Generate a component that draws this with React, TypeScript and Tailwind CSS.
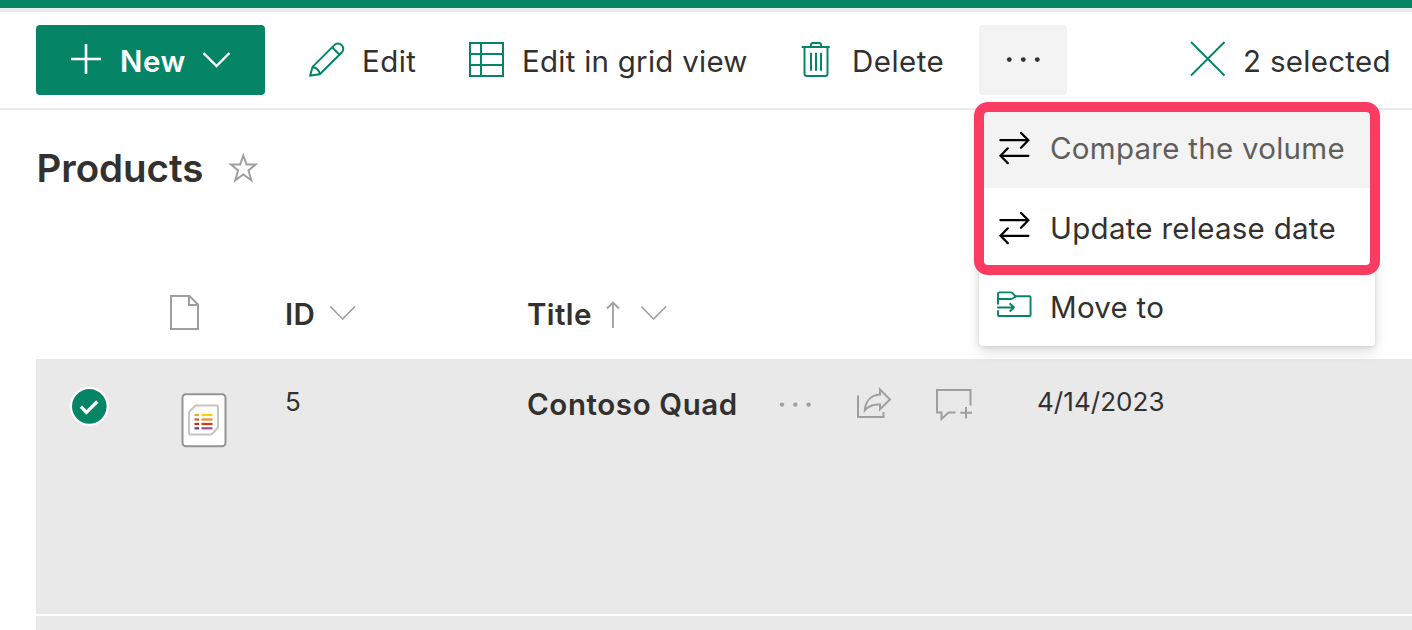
import React from "react";

const GREEN = "#058566";

function PencilIcon() {
  return (
    <svg width="38" height="38" viewBox="0 0 38 38" className="mb-px" fill="none" stroke={GREEN} strokeWidth="2">
      <path d="M2.2 34.6 4.5 25.9 26.3 4.1a5 5 0 0 1 7.4 7.4L11.8 33.2Z" />
      <path d="M24.1 6.3l7.4 7.4M4.5 25.9c3.6.4 6.8 3.4 7.3 7.3" />
    </svg>
  );
}

function GridIcon() {
  return (
    <svg width="35" height="35" viewBox="0 0 35 35" className="mb-px" fill="none" stroke={GREEN} strokeWidth="2">
      <path d="M1 1h33v33H1ZM12 1v33M1 12h33M1 23h33" />
    </svg>
  );
}

function TrashIcon() {
  return (
    <svg width="30" height="35" viewBox="0 0 30 35" className="mb-px" fill="none" stroke={GREEN} strokeWidth="2">
      <path d="M.7 5h28M3.5 5v26.5a2.5 2.5 0 0 0 2.5 2.5h18a2.5 2.5 0 0 0 2.5-2.5V5M10 5V3a2 2 0 0 1 2-2h6a2 2 0 0 1 2 2v2" />
      <path d="M10 10.7v18M15 10.7v18M20 10.7v18" strokeWidth="2" />
    </svg>
  );
}

function Dots({ color, gap, r }: { color: string; gap: number; r: number }) {
  return (
    <svg width="36" height="6" viewBox="0 0 36 6" fill={color}>
      <circle cx={18.3 - gap} cy="2.6" r={r} />
      <circle cx="18.3" cy="2.6" r={r} />
      <circle cx={18.3 + gap} cy="2.6" r={r} />
    </svg>
  );
}

function Chevron() {
  return (
    <svg width="26" height="14" viewBox="0 0 26 14" className="mb-px" fill="none" stroke="#a19f9d" strokeWidth="1.6">
      <path d="M.3.5 12.6 13 25 .5" />
    </svg>
  );
}

function SwapIcon() {
  return (
    <svg width="32" height="34" viewBox="0 0 32 34" className="mb-px" fill="none" stroke="#000" strokeWidth="2.2" strokeLinecap="round">
      <path d="M1.400 9.200h28M22 1.900 29.300 9.200l-7.300 7.500M29.400 24.800h-28M8.800 17.300 1.500 24.800l7.300 7.300" />
    </svg>
  );
}

function MoveIcon() {
  return (
    <svg width="36" height="28" viewBox="0 0 36 28" className="mb-[4px]" fill="none" stroke={GREEN} strokeWidth="2" strokeLinejoin="round">
      <path d="M1 13.5V2.5A1.5 1.5 0 0 1 2.5 1H14.5C16.5 1 17.5 4.500 19.5 5H33.500a1 1 0 0 1 1 1V24.300a1 1 0 0 1-1 1H2a1 1 0 0 1-1-1V19.5" />
      <path d="M1 7.8h13.5c2.5 0 2.5-2.3 5-2.3M.2 16.5h17M13 12.200l4.400 4.300-4.400 4.300" />
    </svg>
  );
}

function ListItemIcon() {
  return (
    <svg width="46" height="55" viewBox="0 0 46 55" fill="none">
      <rect x="1.500" y="1.300" width="43" height="52" rx="3.5" fill="#fff" stroke="#939393" strokeWidth="2" />
      <path d="M14.500 12.500H36a1 1 0 0 1 1 1V34.5L30.5 41.5H9a1 1 0 0 1-1-1V19Z" stroke="#c4c4c4" strokeWidth="2" />
      <g strokeWidth="2.2">
        <path d="M13.5 22h4.5" stroke="#dcb02c" />
        <path d="M20.5 22h11" stroke="#fbcb0c" />
        <path d="M13.5 26.5h4.5" stroke="#e0562a" />
        <path d="M20.5 26.5h11" stroke="#f08a24" />
        <path d="M13.5 31h4.5" stroke="#c42c10" />
        <path d="M20.5 31h11" stroke="#d83b10" />
        <path d="M13.5 35.3h4.5" stroke="#75327c" />
        <path d="M20.5 35.3h11" stroke="#a0479c" />
      </g>
    </svg>
  );
}

function MenuItem({ icon, children, className }: { icon: React.ReactNode; children: React.ReactNode; className: string }) {
  return (
    <div className={`flex items-center pl-5 text-[29.5px] leading-none tracking-[0.27px] ${className}`}>
      <span className="-ml-[2px] flex w-[35px] shrink-0 justify-center">{icon}</span>
      <span className="ml-[18px] pt-[2px] whitespace-nowrap">{children}</span>
    </div>
  );
}

export default function App() {
  return (
    <div className="relative flex h-[630px] w-[1412px] flex-col overflow-hidden bg-white font-['Inter',sans-serif] text-[#323130]">
      <div className="h-3 shrink-0 border-b-4 border-[#eaeaea] bg-[#058566]" />

      <div className="flex h-[98px] shrink-0 items-center border-b-2 border-[#eaeaea] pl-9 text-[29.5px] leading-none tracking-[0.3px] whitespace-nowrap">
        <button className="flex h-[70px] w-[229px] shrink-0 items-center rounded bg-[#058566] pl-[35px] text-white">
          <svg width="30" height="30" viewBox="0 0 30 30" className="mb-[3px]" fill="none" stroke="#fff" strokeWidth="2.6">
            <path d="M15 0v30M0 15h30" />
          </svg>
          <span className="ml-[19px] w-[66px] pt-[4px] text-left font-semibold tracking-[0.5px]">New</span>
          <svg width="28" height="16" viewBox="0 0 28 16" className="mb-px ml-[17px]" fill="none" stroke="#fff" strokeWidth="2.4">
            <path d="M.5 1 13.500 14 26.500 1" />
          </svg>
        </button>
        <div className="ml-[43px] flex w-[161px] shrink-0 items-center">
          <PencilIcon />
          <span className="ml-[16px] pt-[3px] tracking-[0.45px]">Edit</span>
        </div>
        <div className="flex w-[332px] shrink-0 items-center">
          <GridIcon />
          <span className="ml-[18px] pt-[3px] tracking-[0.25px]">Edit in grid view</span>
        </div>
        <div className="flex w-[178px] shrink-0 items-center">
          <TrashIcon />
          <span className="ml-[21px] pt-[3px] tracking-[0.45px]">Delete</span>
        </div>
        <button className="flex h-[70px] w-[88px] shrink-0 items-center justify-center rounded bg-[#f3f3f3]">
          <Dots color="#323130" gap={14} r={2.4} />
        </button>
        <div className="ml-[123px] flex shrink-0 items-center">
          <svg width="36" height="36" viewBox="0 0 36 36" className="mb-[2px]" fill="none" stroke={GREEN} strokeWidth="1.9">
            <path d="M1 1 34.5 34.5M34.5 1 1 34.5" />
          </svg>
          <span className="ml-[17px] pt-[3px]">2 selected</span>
        </div>
      </div>

      <div className="flex h-[116px] shrink-0 items-center pl-9">
        <h1 className="w-[191px] pl-[0.5px] text-[38.5px] leading-none font-semibold tracking-[-0.05px]">Products</h1>
        <svg width="32" height="32" viewBox="0 0 32 32" fill="none" stroke="#a19f9d" strokeWidth="2">
          <path d="M16.300 3.500 19.5 12.600H28.600L21.500 18.400 24.300 28.200 16.300 22.400 8.300 28.200 11.100 18.400 4 12.600H13.100Z" />
        </svg>
      </div>

      <div className="flex h-[133px] shrink-0 items-center pt-[43px] text-[29.5px] leading-none font-semibold tracking-[0.4px]">
        <div className="flex w-[285px] shrink-0 pl-[170px]">
          <svg width="30" height="36" viewBox="0 0 30 36" className="mb-[2px]" fill="none" stroke="#a19f9d" strokeWidth="2">
            <path d="M1 1H19.5L28 9.5V34H1ZM19 1V10H28" />
          </svg>
        </div>
        <div className="flex w-[242px] shrink-0 items-center pb-[2px]">
          <span className="w-[45px] pt-[4px]">ID</span>
          <Chevron />
        </div>
        <div className="flex items-center pb-[2px]">
          <span className="w-[79px] pt-[4px]">Title</span>
          <svg width="14" height="28" viewBox="0 0 14 28" className="mt-1 mr-[21px]" fill="none" stroke="#a19f9d" strokeWidth="1.8">
            <path d="M7 1.5V27M1 7.5 7 1.5 13 7.5" />
          </svg>
          <Chevron />
        </div>
      </div>

      <div className="ml-9 flex h-[255px] shrink-0 items-start bg-[#e9e9e9] leading-none">
        <svg width="40" height="40" viewBox="0 0 40 40" className="mt-[27px] ml-[33px] shrink-0">
          <circle cx="20.3" cy="20.4" r="19.5" fill="#fff" />
          <circle cx="20.3" cy="20.4" r="17.3" fill={GREEN} />
          <path d="M11.9 20.6 17.4 26.4 28.3 15.5" fill="none" stroke="#fff" strokeWidth="3.2" />
        </svg>
        <div className="mt-[34px] ml-[72px] w-[104px] shrink-0">
          <ListItemIcon />
        </div>
        <span className="mt-[30px] w-[242px] shrink-0 text-[26px]">5</span>
        <span className="mt-[31px] w-[250px] shrink-0 text-[29.5px] font-semibold tracking-[0.6px] whitespace-nowrap">Contoso Quad</span>
        <div className="mt-[43px] w-[79px] shrink-0">
          <Dots color="#a19f9d" gap={13.3} r={2.2} />
        </div>
        <svg width="36" height="34" viewBox="0 0 36 34" className="mt-[27px] mr-[43px] shrink-0" fill="none" stroke="#a19f9d" strokeWidth="2">
          <path d="M2 9.5V31H27.5V26" />
          <path d="M24 3.5 34 13.5 24 23.200V18.500C17 18 12.500 20 8.800 24.300 9.500 15 15 9 24 8.500Z" />
        </svg>
        <svg width="38" height="34" viewBox="0 0 38 34" className="mt-[28px] mr-[64px] shrink-0" fill="none" stroke="#a19f9d" strokeWidth="2">
          <path d="M35.5 18.5V3H2V25.500H6.5V32L13.500 25.500H20.5M31 20V31.500M25.3 25.700H37" />
        </svg>
        <span className="mt-[30px] text-[26px] tracking-[0.05px] whitespace-nowrap">4/14/2023</span>
      </div>
      <div className="mt-[2px] ml-9 h-[14px] shrink-0 bg-[#e9e9e9]" />

      <div className="absolute top-[108px] left-[979px] h-[238px] w-[396px] rounded bg-white shadow-[0_6px_14px_rgba(0,0,0,0.13),0_1px_4px_rgba(0,0,0,0.11)]">
        <MenuItem icon={<SwapIcon />} className="h-[80px] bg-[#f3f3f3] text-[#605e5c]">Compare the volume</MenuItem>
        <MenuItem icon={<SwapIcon />} className="h-[80px]">Update release date</MenuItem>
        <MenuItem icon={<MoveIcon />} className="h-[78px]">Move to</MenuItem>
      </div>
      <div className="pointer-events-none absolute top-[102px] left-[974px] h-[173px] w-[406px] rounded-[14px] border-[10px] border-[#fc3b62]" />
    </div>
  );
}
